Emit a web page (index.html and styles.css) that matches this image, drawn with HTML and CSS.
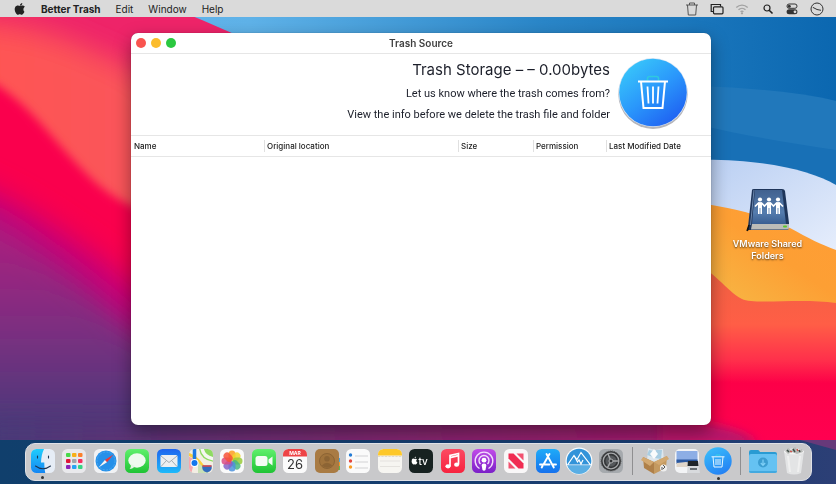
FILE: index.html
```html
<!DOCTYPE html>
<html lang="en">
<head>
<meta charset="utf-8">
<title>Better Trash</title>
<link rel="stylesheet" href="styles.css">
</head>
<body>
<svg class="wallpaper" viewBox="0 0 836 484" preserveAspectRatio="none" aria-hidden="true">
  <defs>
    <linearGradient id="wPurple" x1="0" y1="0" x2="0" y2="1"><stop offset=".1" stop-color="#a5217f"/><stop offset=".4" stop-color="#763080"/><stop offset=".68" stop-color="#463a78"/></linearGradient>
    <linearGradient id="wFloor" x1="0" x2="1" y1="0" y2="0"><stop offset="0" stop-color="#463a78"/><stop offset=".18" stop-color="#603074"/><stop offset=".45" stop-color="#81276f"/><stop offset=".85" stop-color="#a61a6b"/><stop offset="1" stop-color="#e80858"/></linearGradient>
    <linearGradient id="wSky" x1="0" x2="1" y1="0" y2="0"><stop offset="0" stop-color="#66b8ef"/><stop offset=".3" stop-color="#5fb2e8"/><stop offset=".65" stop-color="#2a86c8"/><stop offset="1" stop-color="#0b67b0"/></linearGradient>
    <linearGradient id="wCoral" x1="0" y1="0" x2="1" y2="0"><stop offset="0" stop-color="#ff5452"/><stop offset="1" stop-color="#f9555e"/></linearGradient>
    <linearGradient id="wWhite" x1="0" y1="0" x2="1" y2="1"><stop offset="0" stop-color="#b7cdf2"/><stop offset="1" stop-color="#e8effc"/></linearGradient>
    <linearGradient id="wGold" x1="1" y1="0" x2=".2" y2="1"><stop offset="0" stop-color="#ff9d35"/><stop offset=".45" stop-color="#fd9f34"/><stop offset="1" stop-color="#f5bd49"/></linearGradient>
    <linearGradient id="wRed" x1="0" y1="0" x2="0" y2="1"><stop offset="0" stop-color="#ee6242"/><stop offset=".35" stop-color="#ff5e46"/><stop offset=".55" stop-color="#ff304b"/><stop offset=".68" stop-color="#fd0048"/><stop offset="1" stop-color="#ff0050"/></linearGradient>
    <linearGradient id="wBand" x1="0" x2="1" y1="0" y2="0"><stop offset="0" stop-color="#103f6c"/><stop offset=".8" stop-color="#1a3c70"/><stop offset="1" stop-color="#2c3f76"/></linearGradient>
    <filter id="b5" x="-30%" y="-30%" width="160%" height="160%"><feGaussianBlur stdDeviation="5"/></filter>
    <filter id="b14" x="-30%" y="-30%" width="160%" height="160%"><feGaussianBlur stdDeviation="14"/></filter>
  </defs>
  <rect width="836" height="484" fill="url(#wSky)"/>
  <path d="M700 86C750 88 800 92 836 101V200H700Z" fill="#2178bb"/>
  <path d="M700 125C740 135 790 143 836 150V220H700Z" fill="#1870b6"/>
  <path d="M0 0H155C190 17 240 32 280 60V484H0Z" fill="#ee2469"/>
  <path d="M-30 20C40 25 70 40 110 58S190 100 190 250H100L-30 140Z" fill="url(#wCoral)" filter="url(#b14)"/>
  <path d="M-30 70C20 92 45 130 75 162S120 205 170 218V500H-30Z" fill="#fa004e" filter="url(#b5)"/>
  <path d="M-40 176C30 206 85 245 180 320V520H-40Z" fill="#c50078" filter="url(#b14)"/>
  <path d="M-40 208C20 223 70 275 180 370V540H-40Z" fill="url(#wPurple)" filter="url(#b14)"/>
  <rect x="160" y="350" width="580" height="134" fill="url(#wFloor)"/>
  <rect x="-20" y="425" width="876" height="80" fill="url(#wFloor)" filter="url(#b14)"/>
  <path d="M690 160C760 158 810 170 836 185V260H690Z" fill="url(#wWhite)"/>
  <path d="M690 202C725 206 760 214 790 228C808 238 822 245 836 250V330H690Z" fill="url(#wGold)"/>
  <path d="M690 262C715 270 725 290 742 299C755 305 800 298 836 303V440H690Z" fill="url(#wRed)"/>
  <path d="M660 418C730 424 750 433 758 445H660Z" fill="#b8176a" filter="url(#b5)"/>
  <rect y="440" width="836" height="44" fill="url(#wBand)"/>
  <path d="M800 440H836V450Z" fill="#67397a"/>
</svg>

<header class="menubar">
  <nav class="menus">
    <button class="apple" aria-label="Apple menu"><svg viewBox="0 0 24 24"><path d="M16.600 0c.2 1.500-.4 2.900-1.300 4-.9 1-2.200 1.700-3.500 1.600-.2-1.400.5-2.800 1.300-3.700C14 .8 15.400.1 16.600 0Zm4.300 17.400c-.6 1.400-.9 2-1.700 3.200-1.100 1.600-2.500 3-4 3-1.500 0-1.900-.9-3.700-.9s-2.300.9-3.700.9c-1.600 0-2.800-1.500-3.900-3.100C1 16.100.7 10.900 2.500 8.200c1.300-1.900 3.300-3 5.200-3 1.900 0 3.100 1 4.700 1 1.500 0 2.500-1 4.700-1 1.700 0 3.400.9 4.700 2.500-4.100 2.300-3.400 8.100-.9 9.700Z"/></svg></button>
    <button class="app-name">Better Trash</button>
    <button>Edit</button>
    <button>Window</button>
    <button>Help</button>
  </nav>
  <div class="status">
    <button aria-label="Trash"><svg viewBox="0 0 14 14" fill="none" stroke="#555" stroke-width="1"><path d="M1 3H13M4.500 3V1H9.500V3M2.500 3L3.300 13H10.700L11.500 3"/></svg></button>
    <button aria-label="Windows"><svg viewBox="0 0 14 14" fill="none" stroke="#222" stroke-width="1.200"><path d="M3 9.500H1.200V2.500H10.500V4.500"/><rect x="3.500" y="4.800" width="9.500" height="7" rx="1"/></svg></button>
    <button aria-label="Wi-Fi"><svg viewBox="0 0 14 14" fill="none" stroke="#a2a2a2" stroke-width="1.300"><path d="M1.300 5.500C4.600 2.200 9.400 2.200 12.700 5.500M3.500 7.800C5.500 5.800 8.500 5.800 10.500 7.800M5.600 9.800C6.500 9 7.500 9 8.400 9.800"/><circle cx="7" cy="11.300" r=".5"/></svg></button>
    <button aria-label="Search"><svg viewBox="0 0 14 14" fill="none" stroke="#222" stroke-width="1.200"><circle cx="7" cy="6" r="3"/><path d="M9.200 8.200L12.500 11.500" stroke-width="1.600"/></svg></button>
    <button aria-label="Control Center"><svg viewBox="0 0 14 14"><rect x="2" y="2" width="10" height="4.300" rx="2.100" fill="none" stroke="#333"/><circle cx="4.300" cy="4.200" r="1.500" fill="#333"/><rect x="1.600" y="7.300" width="10.800" height="5" rx="2.500" fill="#333"/><circle cx="10" cy="9.800" r="1.400" fill="#dadada"/></svg></button>
    <button aria-label="Clock"><svg viewBox="0 0 14 14" fill="none" stroke="#333" stroke-width="1"><circle cx="7" cy="7" r="6"/><path d="M2.800 5.300L7 7.500L11 8.300"/></svg></button>
  </div>
</header>

<main class="desktop">
  <section class="window" aria-label="Trash Source">
    <div class="titlebar">
      <div class="lights">
        <button class="close" aria-label="Close"></button>
        <button class="minimize" aria-label="Minimize"></button>
        <button class="expand" aria-label="Zoom"></button>
      </div>
      <h1>Trash Source</h1>
    </div>
    <div class="summary">
      <div class="summary-text">
        <h2>Trash Storage – – 0.00bytes</h2>
        <p>Let us know where the trash comes from?</p>
        <p>View the info before we delete the trash file and folder</p>
      </div>
      <svg class="badge" viewBox="0 0 72 72" aria-hidden="true">
        <defs><linearGradient id="badge" x1=".15" y1=".1" x2=".8" y2=".95"><stop offset="0" stop-color="#38c4fa"/><stop offset=".5" stop-color="#2a97fb"/><stop offset="1" stop-color="#1f61f2"/></linearGradient></defs>
        <circle cx="36" cy="37.300" r="34.700" fill="#b5b5ba"/><circle cx="36" cy="35.500" r="34.500" fill="#d9e6f4"/><circle cx="36" cy="35.500" r="33.800" fill="url(#badge)"/>
        <path d="M30.500 24V21.500Q30.500 19.500 32.500 19.500H39.500Q41.500 19.500 41.500 21.500V24" fill="none" stroke="#2fc9df" stroke-width="1.600"/>
        <path d="M21 24.500H51M24 24.500L26.500 51H45.500L48 24.500" fill="none" stroke="#fff" stroke-width="2"/>
        <path d="M30.500 29.500L31.500 46.500M36 29.500V46.500M41.500 29.500L40.500 46.500" stroke="#fff" stroke-width="1.800"/>
      </svg>
    </div>
    <table class="files">
      <colgroup><col class="c-name"><col class="c-location"><col class="c-size"><col class="c-permission"><col></colgroup>
      <thead><tr><th scope="col"><span>Name</span></th><th scope="col"><span>Original location</span></th><th scope="col"><span>Size</span></th><th scope="col"><span>Permission</span></th><th scope="col"><span>Last Modified Date</span></th></tr></thead>
      <tbody></tbody>
    </table>
  </section>
  <aside class="shortcuts">
    <button class="shortcut">
      <svg viewBox="0 0 44 46" aria-hidden="true">
        <defs><linearGradient id="vol" x1="0" y1="0" x2="0" y2="1"><stop offset="0" stop-color="#41618f"/><stop offset=".65" stop-color="#557dae"/><stop offset="1" stop-color="#395e92"/></linearGradient></defs>
        <path d="M2 40L1 44L5 42Z" fill="#222"/>
        <path d="M6 3Q6 2 8 2H36Q38.500 2 39 4L43 36V40Q43 43 41 43H4Q2 43 2.300 37Z" fill="#1e355a"/>
        <path d="M9 3H36L40 37H6Z" fill="url(#vol)"/>
        <path d="M6 37H43V41Q43 42.500 41 42.500H5Z" fill="#bcbcb8"/><path d="M4.500 38L8 3" stroke="#8eacd2" stroke-width=".7"/>
        <path d="M3 38L1 44" stroke="#111" stroke-width="1.500"/><rect x="37" y="38.500" width="4" height="2" rx="1" fill="#59c928"/>
        <g fill="#fff"><circle cx="14" cy="12.500" r="2.100"/><circle cx="23" cy="12.500" r="2.100"/><circle cx="32" cy="12.500" r="2.100"/></g>
        <path d="M9 19.500L12.500 16H15.500L18.500 19L21.500 16H24.500L27.500 19L30.500 16H33.500L37 19.500" fill="none" stroke="#fff" stroke-width="1.700"/>
        <path d="M12 15.500H16V27H14.400V21H13.600V27H12ZM21 15.500H25V27H23.400V21H22.600V27H21ZM30 15.500H34V27H32.400V21H31.600V27H30Z" fill="#fff"/>
      </svg>
      <span>VMware Shared Folders</span>
    </button>
  </aside>
</main>

<footer class="dock-area">
  <nav class="dock" aria-label="Dock">
    <button class="running" aria-label="Finder"><svg viewBox="0 0 26 26"><defs><linearGradient id="fl" x1="0" y1="0" x2="0" y2="1"><stop offset="0" stop-color="#1fd0fd"/><stop offset="1" stop-color="#1583f2"/></linearGradient><clipPath id="tile"><rect x="1" y="1" width="24" height="24" rx="5.500"/></clipPath></defs><g clip-path="url(#tile)"><rect width="26" height="26" fill="#e6edf6"/><path d="M0 0H14.500C12 5 11.300 9 11 14.500H14.300C14.300 18 14.600 22 15.500 26H0Z" fill="url(#fl)"/></g><path d="M7.500 8V10M18.500 8V10M5.500 18Q13 23.500 20.500 18" fill="none" stroke="#1c3550" stroke-width="1.100" stroke-linecap="round"/></svg></button>
    <button aria-label="Launchpad"><svg viewBox="0 0 26 26"><rect x="1" y="1" width="24" height="24" rx="5.500" fill="#e9e9ec"/><rect x="5" y="5" width="4.500" height="4" rx="1" fill="#48d849"/><rect x="11" y="5" width="4.500" height="4" rx="1" fill="#f7af17"/><rect x="17" y="5" width="4.500" height="4" rx="1" fill="#fb812c"/><rect x="5" y="11" width="4.500" height="4" rx="1" fill="#df1637"/><rect x="11" y="11" width="4.500" height="4" rx="1" fill="#a1a4aa"/><rect x="17" y="11" width="4.500" height="4" rx="1" fill="#f82e60"/><rect x="5" y="17" width="4.500" height="4" rx="1" fill="#8a22b7"/><rect x="11" y="17" width="4.500" height="4" rx="1" fill="#27a3f1"/><rect x="17" y="17" width="4.500" height="4" rx="1" fill="#35d582"/></svg></button>
    <button aria-label="Safari"><svg viewBox="0 0 26 26"><rect x="1" y="1" width="24" height="24" rx="5.500" fill="#f1f2f4"/><circle cx="13" cy="13" r="10.500" fill="#2590e9"/><circle cx="13" cy="13" r="9" fill="none" stroke="#7bc6f5" stroke-width=".8" stroke-dasharray=".5 1"/><path d="M20.500 6.500L14 14.200L11.900 12Z" fill="#ee3535"/><path d="M5.500 19.500L11.900 12L14 14.200Z" fill="#f4f4f4"/></svg></button>
    <button aria-label="Messages"><svg viewBox="0 0 26 26"><defs><linearGradient id="gr" x1="0" y1="0" x2="0" y2="1"><stop offset="0" stop-color="#5ff06c"/><stop offset="1" stop-color="#1fc334"/></linearGradient></defs><rect x="1" y="1" width="24" height="24" rx="5.500" fill="url(#gr)"/><ellipse cx="13" cy="12.500" rx="8.700" ry="7.200" fill="#eefaee"/><path d="M7 16Q7 20 5.500 21Q9 21 11 18Z" fill="#e3f4e3"/></svg></button>
    <button aria-label="Mail"><svg viewBox="0 0 26 26"><defs><linearGradient id="ml" x1="0" y1="0" x2="0" y2="1"><stop offset="0" stop-color="#1e64ef"/><stop offset="1" stop-color="#1dbafa"/></linearGradient></defs><rect x="1" y="1" width="24" height="24" rx="5.500" fill="url(#ml)"/><rect x="4.500" y="7" width="17" height="12" rx="1.500" fill="#eceff1"/><path d="M5 8L13 14.500L21 8M5 18.500L10.500 12.500M21 18.500L15.500 12.500" fill="none" stroke="#9ba6ac" stroke-width=".9"/></svg></button>
    <button aria-label="Maps"><svg viewBox="0 0 26 26"><g clip-path="url(#tile)"><rect width="26" height="26" fill="#f3eee4"/><path d="M11 0H26V14Q12 12 11 0Z" fill="#8edb63"/><path d="M14 0Q15 9 26 11" fill="none" stroke="#f5f7f2" stroke-width="3.500"/><path d="M0 8L7 12L3 26H0Z" fill="#f6a7ae"/><path d="M0 6Q12 10 19 26" fill="none" stroke="#fbcf3d" stroke-width="3"/><path d="M10 14L22 26H10Z" fill="#c9dfb6"/><path d="M6.500 0V13" stroke="#1c79e4" stroke-width="3.500"/><circle cx="6.500" cy="15" r="4" fill="#fff"/><circle cx="6.500" cy="15" r="3" fill="#1476ed"/><path d="M14.500 17.500H23.500Q25 23 19 24.500Q13 23 14.500 17.500Z" fill="#326bbd"/><path d="M14.500 18H23.500" stroke="#df4547" stroke-width="1.500"/></g></svg></button>
    <button aria-label="Photos"><svg viewBox="0 0 26 26"><rect x="1" y="1" width="24" height="24" rx="5.500" fill="#fafafa"/><g fill-opacity=".85"><rect x="9.500" y="2.500" width="7" height="10" rx="3.500" fill="#fb9e20"/><rect x="9.500" y="2.500" width="7" height="10" rx="3.500" fill="#f1d52d" transform="rotate(45 13 13)"/><rect x="9.500" y="2.500" width="7" height="10" rx="3.500" fill="#99cb38" transform="rotate(90 13 13)"/><rect x="9.500" y="2.500" width="7" height="10" rx="3.500" fill="#49b880" transform="rotate(135 13 13)"/><rect x="9.500" y="2.500" width="7" height="10" rx="3.500" fill="#4b92dc" transform="rotate(180 13 13)"/><rect x="9.500" y="2.500" width="7" height="10" rx="3.500" fill="#8563c8" transform="rotate(225 13 13)"/><rect x="9.500" y="2.500" width="7" height="10" rx="3.500" fill="#dc4b82" transform="rotate(270 13 13)"/><rect x="9.500" y="2.500" width="7" height="10" rx="3.500" fill="#f65238" transform="rotate(315 13 13)"/></g></svg></button>
    <button aria-label="FaceTime"><svg viewBox="0 0 26 26"><rect x="1" y="1" width="24" height="24" rx="5.500" fill="url(#gr)"/><rect x="4.500" y="8" width="12" height="10" rx="2.500" fill="#f4fcf4"/><path d="M17.500 11.500L21.500 8.500V17.500L17.500 14.500Z" fill="#f4fcf4"/></svg></button>
    <button aria-label="Calendar"><svg viewBox="0 0 26 26"><g clip-path="url(#tile)"><rect width="26" height="26" fill="#fbfbfb"/><rect width="26" height="8.500" fill="#ee4446"/></g><text class="cal-month" x="13" y="7">MAR</text><text class="cal-day" x="13" y="21">26</text></svg></button>
    <button aria-label="Contacts"><svg viewBox="0 0 26 26"><path d="M22 10H26V14H22Z" fill="#4aa5df"/><path d="M22 14H26V18H22Z" fill="#f0992f"/><path d="M22 18H26V22H22Z" fill="#5fb852"/><rect x="1" y="1" width="24" height="24" rx="5" fill="#a97b43"/><circle cx="13" cy="13" r="7.500" fill="#a0733c" stroke="#8c6434"/><circle cx="13" cy="10.800" r="2.800" fill="#8c6434"/><path d="M7.800 17.500Q13 12 18.200 17.500Q13 22 7.800 17.500Z" fill="#8c6434"/></svg></button>
    <button aria-label="Reminders"><svg viewBox="0 0 26 26"><rect x="1" y="1" width="24" height="24" rx="5.500" fill="#fafafa"/><circle cx="5.500" cy="7" r="1.700" fill="#237bd5"/><circle cx="5.500" cy="13" r="1.700" fill="#e4453d"/><circle cx="5.500" cy="19" r="1.700" fill="#f79b24"/><path d="M10 8H23M10 14H23M10 20H23" stroke="#c8c8ca" stroke-width=".8"/></svg></button>
    <button aria-label="Notes"><svg viewBox="0 0 26 26"><g clip-path="url(#tile)"><rect width="26" height="26" fill="#f6f5f1"/><rect width="26" height="7.500" fill="#fdc829"/></g><path d="M1 8.500H25" stroke="#b7aa87" stroke-width=".6" stroke-dasharray=".6 .8"/><path d="M3 13H23M3 18.500H23" stroke="#dcdad6" stroke-width=".7"/></svg></button>
    <button aria-label="TV"><svg viewBox="0 0 26 26"><rect x="1" y="1" width="24" height="24" rx="5.500" fill="#172221"/><path d="M8 8.500Q6.400 9 6.600 10.300Q8 10 8 8.500ZM6.600 11Q4.900 10 3.900 11.400Q3 13.600 4.600 16Q5.300 16.800 6.500 16.200Q7.900 16.900 8.700 15.800L9.400 14.500Q7.300 13.200 9 11.200Q8 10.300 6.600 11Z" fill="#fff"/><text class="tv-text" x="10.500" y="16.500">tv</text></svg></button>
    <button aria-label="Music"><svg viewBox="0 0 26 26"><defs><linearGradient id="mu" x1="0" y1="0" x2="0" y2="1"><stop offset="0" stop-color="#fc4b62"/><stop offset="1" stop-color="#f7233f"/></linearGradient></defs><rect x="1" y="1" width="24" height="24" rx="5.500" fill="url(#mu)"/><path d="M10 18V7.500L18.500 5.500V16.500M10 9.700L18.500 7.700" fill="none" stroke="#fff" stroke-width="1.700"/><ellipse cx="8" cy="18.300" rx="2.600" ry="2.100" fill="#fff"/><ellipse cx="16.600" cy="16.700" rx="2.500" ry="2.100" fill="#fff"/></svg></button>
    <button aria-label="Podcasts"><svg viewBox="0 0 26 26"><defs><linearGradient id="po" x1="0" y1="0" x2="0" y2="1"><stop offset="0" stop-color="#c14de8"/><stop offset="1" stop-color="#7b1fc8"/></linearGradient></defs><rect x="1" y="1" width="24" height="24" rx="5.500" fill="url(#po)"/><path d="M8.500 20.500A8.800 8.800 0 1 1 17.500 20.500M9.500 16A5 5 0 1 1 16.500 16" fill="none" stroke="#f2ddfb" stroke-width="1.400"/><circle cx="13" cy="12.200" r="2.400" fill="#fff"/><path d="M10.700 17.500Q10.500 15.500 13 15.500T15.300 17.500L14.500 22Q13 23.500 11.500 22Z" fill="#fff"/></svg></button>
    <button aria-label="News"><svg viewBox="0 0 26 26"><rect x="1" y="1" width="24" height="24" rx="5.500" fill="#f9f7f8"/><path d="M5.500 5.500H10.500L20.500 15.500V20.500H15.500L5.500 10.500Z" fill="#f02c52"/><path d="M13.500 5.500H20.500V12.500ZM5.500 13.500L12.500 20.500H5.500Z" fill="#f2516f"/></svg></button>
    <button aria-label="App Store"><svg viewBox="0 0 26 26"><defs><linearGradient id="as" x1="0" y1="0" x2="0" y2="1"><stop offset="0" stop-color="#1eabf8"/><stop offset="1" stop-color="#1671ed"/></linearGradient></defs><rect x="1" y="1" width="24" height="24" rx="5.500" fill="url(#as)"/><path d="M11.500 6L18.800 19.500M14.500 6L8.500 16.500M7.500 18L6.700 19.500M5 16.500H14.500M17.500 16.500H21" fill="none" stroke="#fff" stroke-width="1.900" stroke-linecap="round"/></svg></button>
    <button aria-label="App Cleaner"><svg class="round" viewBox="0 0 28 28"><circle cx="14" cy="14" r="13.500" fill="#fafcfd"/><circle cx="14" cy="14" r="12.300" fill="#3293d9"/><path d="M2.500 18L9 8.500L12 12.500L16 5.500L25.500 18H2.500M9 8.500L12.500 15L14 13L16 17L18 13" fill="none" stroke="#fff" stroke-width="1.200"/><path d="M2.300 18.500H25.700A12.300 12.300 0 0 1 2.300 18.500Z" fill="#5aaee4"/></svg></button>
    <button aria-label="System Preferences"><svg viewBox="0 0 26 26"><rect x="1" y="1" width="24" height="24" rx="5.500" fill="#a5a9ad"/><circle cx="13" cy="13" r="10" fill="#343638"/><circle cx="13" cy="13" r="10" fill="none" stroke="#555" stroke-dasharray="1 1"/><circle cx="13" cy="13" r="7.800" fill="none" stroke="#a6a8aa" stroke-width="1.300"/><circle cx="13" cy="13" r="5.500" fill="#55585b"/><path d="M13 13L10 6M13 13H20.500M13 13L9.500 19.500" stroke="#a9abad" stroke-width="1.500"/><circle cx="13" cy="13" r="2" fill="#303234" stroke="#a9abad"/></svg></button>
    <hr>
    <button aria-label="Package"><svg class="round" viewBox="0 0 28 28"><path d="M7 1L14 3L22 2L23 14L6 16Z" fill="#dce6ed"/><path d="M8 3L13 4L12 10L6 8ZM15 3L21 3L20 12L14 11Z" fill="#a9cde2"/><path d="M13 2L17 7L13 12L9 7Z" fill="#f9fbfc"/><path d="M2 10L13 15V27L3 21Z" fill="#af8049"/><path d="M13 15L26 9L25 21L13 27Z" fill="#c49a61"/><path d="M2 10L13 15L9 19L0 13ZM26 9L13 15L18 18L28 12Z" fill="#d2a870"/><circle cx="22.500" cy="21" r="3.500" fill="#eee"/><path d="M22 18L24 20L22 22M21 20V23" stroke="#555" fill="none"/></svg></button>
    <button aria-label="Preview"><svg viewBox="0 0 26 26"><rect x="1" y="1" width="24" height="24" rx="5" fill="#f3f4f6"/><rect x="2.500" y="3" width="21" height="11" fill="#8daee5"/><path d="M2.500 11.500H23.500V16H2.500Z" fill="#29579f"/><path d="M2.500 15L12 14L23.500 16V19H2.500Z" fill="#dfd5c9"/><path d="M14 13H24L26 25H13Z" fill="#d8dadd"/><path d="M14 13H24L24.500 18H13.500Z" fill="#20252a"/><path d="M16 21H23" stroke="#454b50" stroke-width="1.500"/></svg></button>
    <button class="running" aria-label="Better Trash"><svg class="round" viewBox="0 0 28 28"><defs><linearGradient id="mini" x1=".2" y1="0" x2=".7" y2="1"><stop offset="0" stop-color="#39bdfa"/><stop offset="1" stop-color="#2480f4"/></linearGradient></defs><circle cx="14" cy="14" r="13.700" fill="url(#mini)"/><path d="M7.500 9.800H20.500M9 9.800L10 20H18L19 9.800M12 12V18M14 12V18M16 12V18" fill="none" stroke="#e9f8ff" stroke-width="1"/><path d="M12 9V8H16V9" fill="none" stroke="#38d0e7"/></svg></button>
    <hr>
    <button aria-label="Downloads"><svg class="round" viewBox="0 0 28 28"><path d="M0 5Q0 3 2 3H9Q10 3 11 5H26Q28 5 28 7V12H0Z" fill="#299bd3"/><rect x="0" y="7" width="28" height="19" rx="2" fill="#65c2f2"/><path d="M0 24H28Q28 26 26 26H2Q0 26 0 24Z" fill="#43a9df"/><circle cx="14" cy="15.500" r="5" fill="#3b9dd1"/><path d="M14 12.500V18M11.800 16L14 18.300L16.200 16" fill="none" stroke="#7fd0f7" stroke-width="1.200"/></svg></button>
    <button aria-label="Trash"><svg class="round" viewBox="0 0 28 28"><path d="M4 4H24L21 26Q14 29 7 26Z" fill="#e3e4e5"/><path d="M8 9L10 25M20 9L18 25" stroke="#efefef" stroke-width="2"/><ellipse cx="14" cy="4.500" rx="10" ry="3" fill="#f3f3f3"/><path d="M5 4L8 1L11 3L15 0L18 3L22 2L23 5L17 7L12 5L8 7Z" fill="#b8bab8"/><path d="M7 3L9 5M13 2L15 5M19 3L20 5" stroke="#3f4b45" stroke-width="1.500"/><path d="M10 4L12 5M17 2L18 4" stroke="#d34b42" stroke-width="1.300"/></svg></button>
  </nav>
</footer>
</body>
</html>
```

FILE: styles.css
```css
* {
  box-sizing: border-box;
}

body {
  margin: 0;
  min-height: 100vh;
  display: flex;
  flex-direction: column;
  font-family: Inter, "Liberation Sans", sans-serif;
  color: #222;
}

button {
  margin: 0;
  padding: 0;
  border: 0;
  background: none;
  color: inherit;
  font: inherit;
}

svg {
  display: block;
}

.wallpaper {
  position: fixed;
  inset: 0;
  z-index: -1;
  width: 100%;
  height: 100%;
}

/* Menu bar */
.menubar {
  display: flex;
  align-items: center;
  justify-content: space-between;
  height: 17px;
  padding: 0 12px 0 14px;
  background: #dadada;
  font-size: 10px;
}

.menus {
  display: flex;
  align-items: center;
  gap: 15px;
}

.apple svg {
  width: 12px;
  height: 12px;
  fill: #222;
}

.app-name {
  font-weight: 700;
}

.status {
  display: flex;
  align-items: center;
  gap: 11px;
}

.status svg {
  width: 14px;
  height: 14px;
}

/* Desktop */
.desktop {
  flex: 1;
  display: flex;
  padding: 16px 0 15px 131px;
}

.window {
  flex: 1;
  display: flex;
  flex-direction: column;
  overflow: hidden;
  border-radius: 7px;
  background: #fff;
  box-shadow: 0 0 1px rgba(0, 0, 0, 0.5), 0 7px 18px rgba(0, 0, 0, 0.4);
}

.titlebar {
  display: grid;
  grid-template-columns: 1fr auto 1fr;
  align-items: center;
  height: 21px;
  padding: 0 5px;
  border-bottom: 1px solid #e6e6e6;
}

.titlebar h1 {
  margin: 0;
  font-size: 10px;
  line-height: 18px;
  font-weight: 600;
  color: #404040;
}

.lights {
  display: flex;
  gap: 5px;
}

.lights button {
  width: 10px;
  height: 10px;
  border-radius: 50%;
}

.close {
  background: #f9544f;
}

.minimize {
  background: #fbbc2d;
}

.expand {
  background: #2bc840;
}

.summary {
  display: flex;
  justify-content: flex-end;
  gap: 7px;
  padding: 3px 22px 6px;
  border-bottom: 1px solid #e6e6e6;
}

.summary-text {
  padding-top: 3px;
  font-family: Roboto, "Liberation Sans", sans-serif;
  text-align: right;
  color: #1c1f2a;
}

.summary h2 {
  margin: 0 0 3px;
  font-family: Inter, "Liberation Sans", sans-serif;
  font-size: 15px;
  line-height: 20px;
  font-weight: 400;
}

.summary p {
  margin: 0;
  font-size: 11px;
  line-height: 21px;
}

.badge {
  width: 72px;
  height: 72px;
}

.files {
  width: 100%;
  table-layout: fixed;
  border-collapse: collapse;
  border-bottom: 1px solid #e6e6e6;
}

.files th {
  padding: 4px 0;
  font-size: 8px;
  line-height: 12px;
  font-weight: 500;
  text-align: left;
}

.files th span {
  display: block;
  padding-left: 3px;
}

.files th + th span {
  padding-left: 2px;
  border-left: 1px solid #e0e0e0;
}

.c-name {
  width: 133px;
}

.c-location {
  width: 194px;
}

.c-size {
  width: 75px;
}

.c-permission {
  width: 73px;
}

.shortcuts {
  width: 125px;
  padding: 154px 17px 0 5px;
}

.shortcut {
  display: flex;
  flex-direction: column;
  align-items: center;
  gap: 5px;
  width: 100%;
  color: #fff;
  font-size: 9px;
  line-height: 12px;
  font-weight: 600;
  text-shadow: 0 1px 2px rgba(0, 0, 0, 0.7);
}

.shortcut svg {
  width: 44px;
  height: 46px;
}

.shortcut span {
  width: 80px;
}

/* Dock */
.dock-area {
  padding: 3px 24px 3px 25px;
}

.dock {
  display: flex;
  align-items: center;
  height: 38px;
  padding: 0 1px 2px;
  border: 1px solid #dfe1e6;
  border-radius: 10px;
  background: #c9c9cb;
}

.dock button {
  position: relative;
  flex: 1;
  display: flex;
  justify-content: center;
}

.dock svg {
  width: 26px;
  height: 26px;
}

.dock svg.round {
  width: 28px;
  height: 28px;
}

.dock hr {
  width: 1px;
  height: 28px;
  margin: 0 6px;
  border: 0;
  background: #8f8f91;
}

.running::after {
  content: "";
  position: absolute;
  bottom: -5px;
  width: 3px;
  height: 3px;
  border-radius: 50%;
  background: #333;
}

.cal-month {
  font-size: 5px;
  font-weight: 700;
  text-anchor: middle;
  fill: #fff;
}

.cal-day {
  font-size: 13px;
  text-anchor: middle;
  fill: #333;
}

.tv-text {
  font-size: 10px;
  font-weight: 500;
  fill: #fff;
}
```
